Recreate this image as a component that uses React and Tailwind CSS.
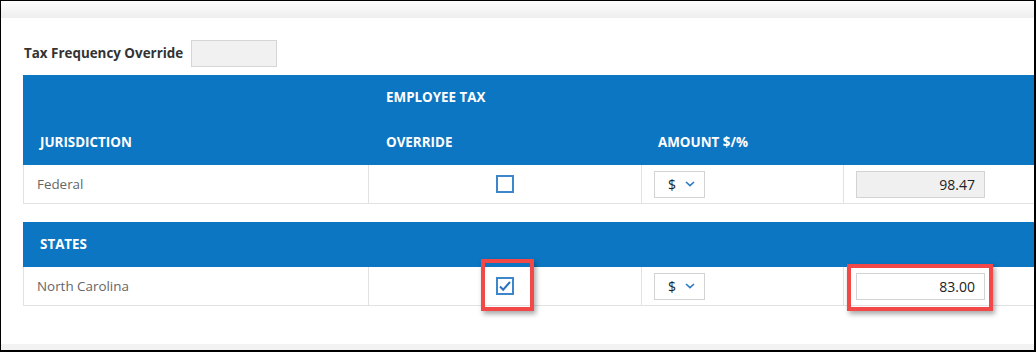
import React from "react";

const font = { fontFamily: '"Open Sans", "Noto Sans", Arial, sans-serif' };

function Chevron() {
  return (
    <svg width="10" height="6" viewBox="0 0 10 6" fill="none">
      <path d="M1 1l4 3.6L9 1" stroke="#2a7cc7" strokeWidth="1.6" />
    </svg>
  );
}

function Checkbox({ checked }) {
  return (
    <div className="w-[18px] h-[18px] border-2 border-[#3d86cc] bg-white flex items-center justify-center">
      {checked && (
        <svg width="14" height="12" viewBox="0 0 14 12" fill="none">
          <path d="M2 6.5l3.2 3.2L12 2" stroke="#2a72bd" strokeWidth="2" />
        </svg>
      )}
    </div>
  );
}

function Select() {
  return (
    <div className="w-[51px] h-[27px] border border-[#d3d3d3] bg-white flex items-center gap-[9px] pl-[13px] text-[14px] text-[#222]">
      <span>$</span>
      <Chevron />
    </div>
  );
}

function Row({ name, checked, value, editable, highlight }) {
  return (
    <div className="grid grid-cols-[345px_273px_202px_1fr] h-[39px] border-l border-b border-[#e2e2e2] text-[13.4px]">
      <div className="border-r border-[#e2e2e2] flex items-center pl-[13px] text-[#666]">{name}</div>
      <div className="border-r border-[#e2e2e2] flex items-center justify-center relative">
        <Checkbox checked={checked} />
        {highlight && (
          <div className="absolute left-[112px] top-[-8px] w-[53px] h-[52px] border-4 border-[#f24848] shadow-[2px_3px_5px_rgba(0,0,0,0.35)]" />
        )}
      </div>
      <div className="border-r border-[#e2e2e2] flex items-center pl-[12px]">
        <Select />
      </div>
      <div className="flex items-center pl-[12px] relative">
        <div
          className={
            "w-[129px] h-[27px] border border-[#d3d3d3] flex items-center justify-end pr-[9px] text-[14px] text-[#222] " +
            (editable ? "bg-white" : "bg-[#f0f0f0]")
          }
        >
          {value}
        </div>
        {highlight && (
          <div className="absolute left-[3px] top-[-3px] w-[146px] h-[47px] border-4 border-[#f24848] shadow-[2px_3px_5px_rgba(0,0,0,0.35)]" />
        )}
      </div>
    </div>
  );
}

export default function App() {
  return (
    <div
      className="w-[1036px] h-[352px] border-t border-l border-r-2 border-b-2 border-black bg-white flex flex-col overflow-hidden"
      style={font}
    >
      <div className="h-[17px] bg-gradient-to-b from-[#fdfdfd] to-[#eeeeee]" />
      <div className="flex-1 pl-[22px] pt-[22px] overflow-hidden">
        <div className="flex items-center gap-[8px] h-[26px]">
          <span className="pl-[1px] text-[13.4px] font-bold text-[#333]">Tax Frequency Override</span>
          <div className="w-[86px] h-[27px] bg-[#f1f1f1] border border-[#d6d6d6]" />
        </div>

        <div className="mt-[9px] w-[1040px]">
          <div className="bg-[#0c76c2] text-white font-bold text-[13.4px] uppercase">
            <div className="grid grid-cols-[345px_273px_202px_1fr] h-[45px] items-center">
              <div />
              <div className="pl-[18px]">Employee Tax</div>
              <div />
              <div />
            </div>
            <div className="grid grid-cols-[345px_273px_202px_1fr] h-[45px] items-center">
              <div className="pl-[17px]">Jurisdiction</div>
              <div className="pl-[18px]">Override</div>
              <div className="pl-[17px]">Amount $/%</div>
              <div />
            </div>
          </div>
          <Row name="Federal" value="98.47" />

          <div className="mt-[18px] bg-[#0c76c2] text-white font-bold text-[13.4px] uppercase h-[45px] flex items-center pl-[17px]">
            States
          </div>
          <Row name="North Carolina" checked value="83.00" editable highlight />
        </div>
      </div>
      <div className="h-[6px] bg-[#f2f2f2]" />
    </div>
  );
}
